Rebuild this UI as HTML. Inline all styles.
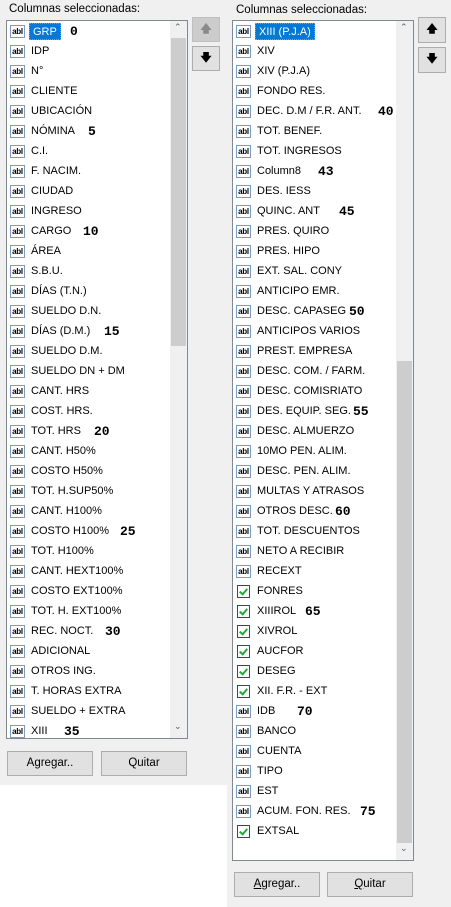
<!DOCTYPE html>
<html><head><meta charset="utf-8"><style>
*{box-sizing:border-box;margin:0;padding:0}
body{width:451px;height:907px;background:#fff;font-family:"Liberation Sans",sans-serif;font-size:11px;color:#000;position:relative;overflow:hidden}
.pan{position:absolute;background:#f0f0f0}
.lbl{position:absolute;font-size:11.5px;color:#000}
.box{position:absolute;background:#fff;border:1px solid #828790;overflow:hidden}
.r{height:20px;position:relative;white-space:nowrap;line-height:21px}
.r .t{position:absolute;left:24px;top:0}
.ab{position:absolute;left:3px;top:4px;width:15px;height:13px;border:1px solid #7a9cc0;font-size:8px;font-weight:bold;line-height:11px;text-align:center;letter-spacing:-0.3px;color:#000}
.ck{position:absolute;left:4px;top:4px;width:13px;height:13px;border:1px solid #1e4f7d;background:#fff}
.ck:after{content:"";position:absolute;left:3px;top:1px;width:3px;height:6px;border:solid #22a83a;border-width:0 2px 2px 0;transform:rotate(40deg)}
.n{position:absolute;font-weight:bold;font-size:13px;top:0;font-family:"Liberation Mono",monospace}
.sel{position:absolute;left:22px;top:2px;height:17px;padding:0 3px;background:#0078d7;color:#fff;line-height:16px;border:1px dotted #e08a2c}
.sb{position:absolute;background:#f0f0f0}
.th{position:absolute;background:#cdcdcd}
.btn{position:absolute;background:#e1e1e1;border:1px solid #adadad;text-align:center;line-height:22px;font-size:11.5px}
.ar{position:absolute;border:1px solid #adadad;background:#e1e1e1;text-align:center;font-size:11px;line-height:23px;font-weight:bold}
</style></head><body>
<div class="pan" style="left:0;top:0;width:227px;height:785px"></div>
<div class="pan" style="left:227px;top:0;width:224px;height:907px"></div>

<div class="lbl" style="left:9px;top:3px">Columnas seleccionadas:</div>
<div class="box" style="left:6px;top:20px;width:182px;height:719px">
<div class="sb" style="left:163px;top:0;width:17px;height:717px"></div>
<div class="th" style="left:164px;top:17px;width:15px;height:308px"></div>
<div style="position:absolute;left:167px;top:1px;font-size:9px;color:#606060">&#8963;</div>
<div style="position:absolute;left:167px;top:700px;font-size:9px;color:#606060">&#8964;</div>
<div style="position:absolute;left:0;top:0;width:163px">
<div class="r"><span class="ab">abl</span><span class="sel">GRP</span><span class="n" style="left:63px">0</span></div>
<div class="r"><span class="ab">abl</span><span class="t">IDP</span></div>
<div class="r"><span class="ab">abl</span><span class="t">N°</span></div>
<div class="r"><span class="ab">abl</span><span class="t">CLIENTE</span></div>
<div class="r"><span class="ab">abl</span><span class="t">UBICACIÓN</span></div>
<div class="r"><span class="ab">abl</span><span class="t">NÓMINA</span><span class="n" style="left:81px">5</span></div>
<div class="r"><span class="ab">abl</span><span class="t">C.I.</span></div>
<div class="r"><span class="ab">abl</span><span class="t">F. NACIM.</span></div>
<div class="r"><span class="ab">abl</span><span class="t">CIUDAD</span></div>
<div class="r"><span class="ab">abl</span><span class="t">INGRESO</span></div>
<div class="r"><span class="ab">abl</span><span class="t">CARGO</span><span class="n" style="left:76px">10</span></div>
<div class="r"><span class="ab">abl</span><span class="t">ÁREA</span></div>
<div class="r"><span class="ab">abl</span><span class="t">S.B.U.</span></div>
<div class="r"><span class="ab">abl</span><span class="t">DÍAS (T.N.)</span></div>
<div class="r"><span class="ab">abl</span><span class="t">SUELDO D.N.</span></div>
<div class="r"><span class="ab">abl</span><span class="t">DÍAS (D.M.)</span><span class="n" style="left:97px">15</span></div>
<div class="r"><span class="ab">abl</span><span class="t">SUELDO D.M.</span></div>
<div class="r"><span class="ab">abl</span><span class="t">SUELDO DN + DM</span></div>
<div class="r"><span class="ab">abl</span><span class="t">CANT. HRS</span></div>
<div class="r"><span class="ab">abl</span><span class="t">COST. HRS.</span></div>
<div class="r"><span class="ab">abl</span><span class="t">TOT. HRS</span><span class="n" style="left:87px">20</span></div>
<div class="r"><span class="ab">abl</span><span class="t">CANT. H50%</span></div>
<div class="r"><span class="ab">abl</span><span class="t">COSTO H50%</span></div>
<div class="r"><span class="ab">abl</span><span class="t">TOT. H.SUP50%</span></div>
<div class="r"><span class="ab">abl</span><span class="t">CANT. H100%</span></div>
<div class="r"><span class="ab">abl</span><span class="t">COSTO H100%</span><span class="n" style="left:113px">25</span></div>
<div class="r"><span class="ab">abl</span><span class="t">TOT. H100%</span></div>
<div class="r"><span class="ab">abl</span><span class="t">CANT. HEXT100%</span></div>
<div class="r"><span class="ab">abl</span><span class="t">COSTO EXT100%</span></div>
<div class="r"><span class="ab">abl</span><span class="t">TOT. H. EXT100%</span></div>
<div class="r"><span class="ab">abl</span><span class="t">REC. NOCT.</span><span class="n" style="left:98px">30</span></div>
<div class="r"><span class="ab">abl</span><span class="t">ADICIONAL</span></div>
<div class="r"><span class="ab">abl</span><span class="t">OTROS ING.</span></div>
<div class="r"><span class="ab">abl</span><span class="t">T. HORAS EXTRA</span></div>
<div class="r"><span class="ab">abl</span><span class="t">SUELDO + EXTRA</span></div>
<div class="r"><span class="ab">abl</span><span class="t">XIII</span><span class="n" style="left:57px">35</span></div>
</div></div>
<div class="ar" style="left:192px;top:17px;width:28px;height:25px;background:#cccccc;border-color:#bfbfbf;color:#8a8a8a">&#129093;</div>
<div class="ar" style="left:192px;top:46px;width:28px;height:25px">&#129095;</div>
<div class="btn" style="left:7px;top:751px;width:86px;height:25px">Agregar..</div>
<div class="btn" style="left:101px;top:751px;width:86px;height:25px">Quitar</div>

<div class="lbl" style="left:236px;top:4px">Columnas seleccionadas:</div>
<div class="box" style="left:232px;top:20px;width:182px;height:841px">
<div class="sb" style="left:163px;top:0;width:17px;height:839px"></div>
<div class="th" style="left:164px;top:340px;width:15px;height:482px"></div>
<div style="position:absolute;left:167px;top:1px;font-size:9px;color:#606060">&#8963;</div>
<div style="position:absolute;left:167px;top:822px;font-size:9px;color:#606060">&#8964;</div>
<div style="position:absolute;left:0;top:0;width:163px">
<div class="r"><span class="ab">abl</span><span class="sel">XIII (P.J.A)</span></div>
<div class="r"><span class="ab">abl</span><span class="t">XIV</span></div>
<div class="r"><span class="ab">abl</span><span class="t">XIV (P.J.A)</span></div>
<div class="r"><span class="ab">abl</span><span class="t">FONDO RES.</span></div>
<div class="r"><span class="ab">abl</span><span class="t">DEC. D.M / F.R. ANT.</span><span class="n" style="left:145px">40</span></div>
<div class="r"><span class="ab">abl</span><span class="t">TOT. BENEF.</span></div>
<div class="r"><span class="ab">abl</span><span class="t">TOT. INGRESOS</span></div>
<div class="r"><span class="ab">abl</span><span class="t">Column8</span><span class="n" style="left:85px">43</span></div>
<div class="r"><span class="ab">abl</span><span class="t">DES. IESS</span></div>
<div class="r"><span class="ab">abl</span><span class="t">QUINC. ANT</span><span class="n" style="left:106px">45</span></div>
<div class="r"><span class="ab">abl</span><span class="t">PRES. QUIRO</span></div>
<div class="r"><span class="ab">abl</span><span class="t">PRES. HIPO</span></div>
<div class="r"><span class="ab">abl</span><span class="t">EXT. SAL. CONY</span></div>
<div class="r"><span class="ab">abl</span><span class="t">ANTICIPO EMR.</span></div>
<div class="r"><span class="ab">abl</span><span class="t">DESC. CAPASEG</span><span class="n" style="left:116px">50</span></div>
<div class="r"><span class="ab">abl</span><span class="t">ANTICIPOS VARIOS</span></div>
<div class="r"><span class="ab">abl</span><span class="t">PREST. EMPRESA</span></div>
<div class="r"><span class="ab">abl</span><span class="t">DESC. COM. / FARM.</span></div>
<div class="r"><span class="ab">abl</span><span class="t">DESC. COMISRIATO</span></div>
<div class="r"><span class="ab">abl</span><span class="t">DES. EQUIP. SEG.</span><span class="n" style="left:120px">55</span></div>
<div class="r"><span class="ab">abl</span><span class="t">DESC. ALMUERZO</span></div>
<div class="r"><span class="ab">abl</span><span class="t">10MO PEN. ALIM.</span></div>
<div class="r"><span class="ab">abl</span><span class="t">DESC. PEN. ALIM.</span></div>
<div class="r"><span class="ab">abl</span><span class="t">MULTAS Y ATRASOS</span></div>
<div class="r"><span class="ab">abl</span><span class="t">OTROS DESC.</span><span class="n" style="left:102px">60</span></div>
<div class="r"><span class="ab">abl</span><span class="t">TOT. DESCUENTOS</span></div>
<div class="r"><span class="ab">abl</span><span class="t">NETO A RECIBIR</span></div>
<div class="r"><span class="ab">abl</span><span class="t">RECEXT</span></div>
<div class="r"><span class="ck"></span><span class="t">FONRES</span></div>
<div class="r"><span class="ck"></span><span class="t">XIIIROL</span><span class="n" style="left:72px">65</span></div>
<div class="r"><span class="ck"></span><span class="t">XIVROL</span></div>
<div class="r"><span class="ck"></span><span class="t">AUCFOR</span></div>
<div class="r"><span class="ck"></span><span class="t">DESEG</span></div>
<div class="r"><span class="ck"></span><span class="t">XII. F.R. - EXT</span></div>
<div class="r"><span class="ab">abl</span><span class="t">IDB</span><span class="n" style="left:64px">70</span></div>
<div class="r"><span class="ab">abl</span><span class="t">BANCO</span></div>
<div class="r"><span class="ab">abl</span><span class="t">CUENTA</span></div>
<div class="r"><span class="ab">abl</span><span class="t">TIPO</span></div>
<div class="r"><span class="ab">abl</span><span class="t">EST</span></div>
<div class="r"><span class="ab">abl</span><span class="t">ACUM. FON. RES.</span><span class="n" style="left:127px">75</span></div>
<div class="r"><span class="ck"></span><span class="t">EXTSAL</span></div>
</div></div>
<div class="ar" style="left:418px;top:17px;width:28px;height:26px">&#129093;</div>
<div class="ar" style="left:418px;top:47px;width:28px;height:26px">&#129095;</div>
<div class="btn" style="left:234px;top:872px;width:86px;height:25px"><u>A</u>gregar..</div>
<div class="btn" style="left:327px;top:872px;width:86px;height:25px"><u>Q</u>uitar</div>
</body></html>
